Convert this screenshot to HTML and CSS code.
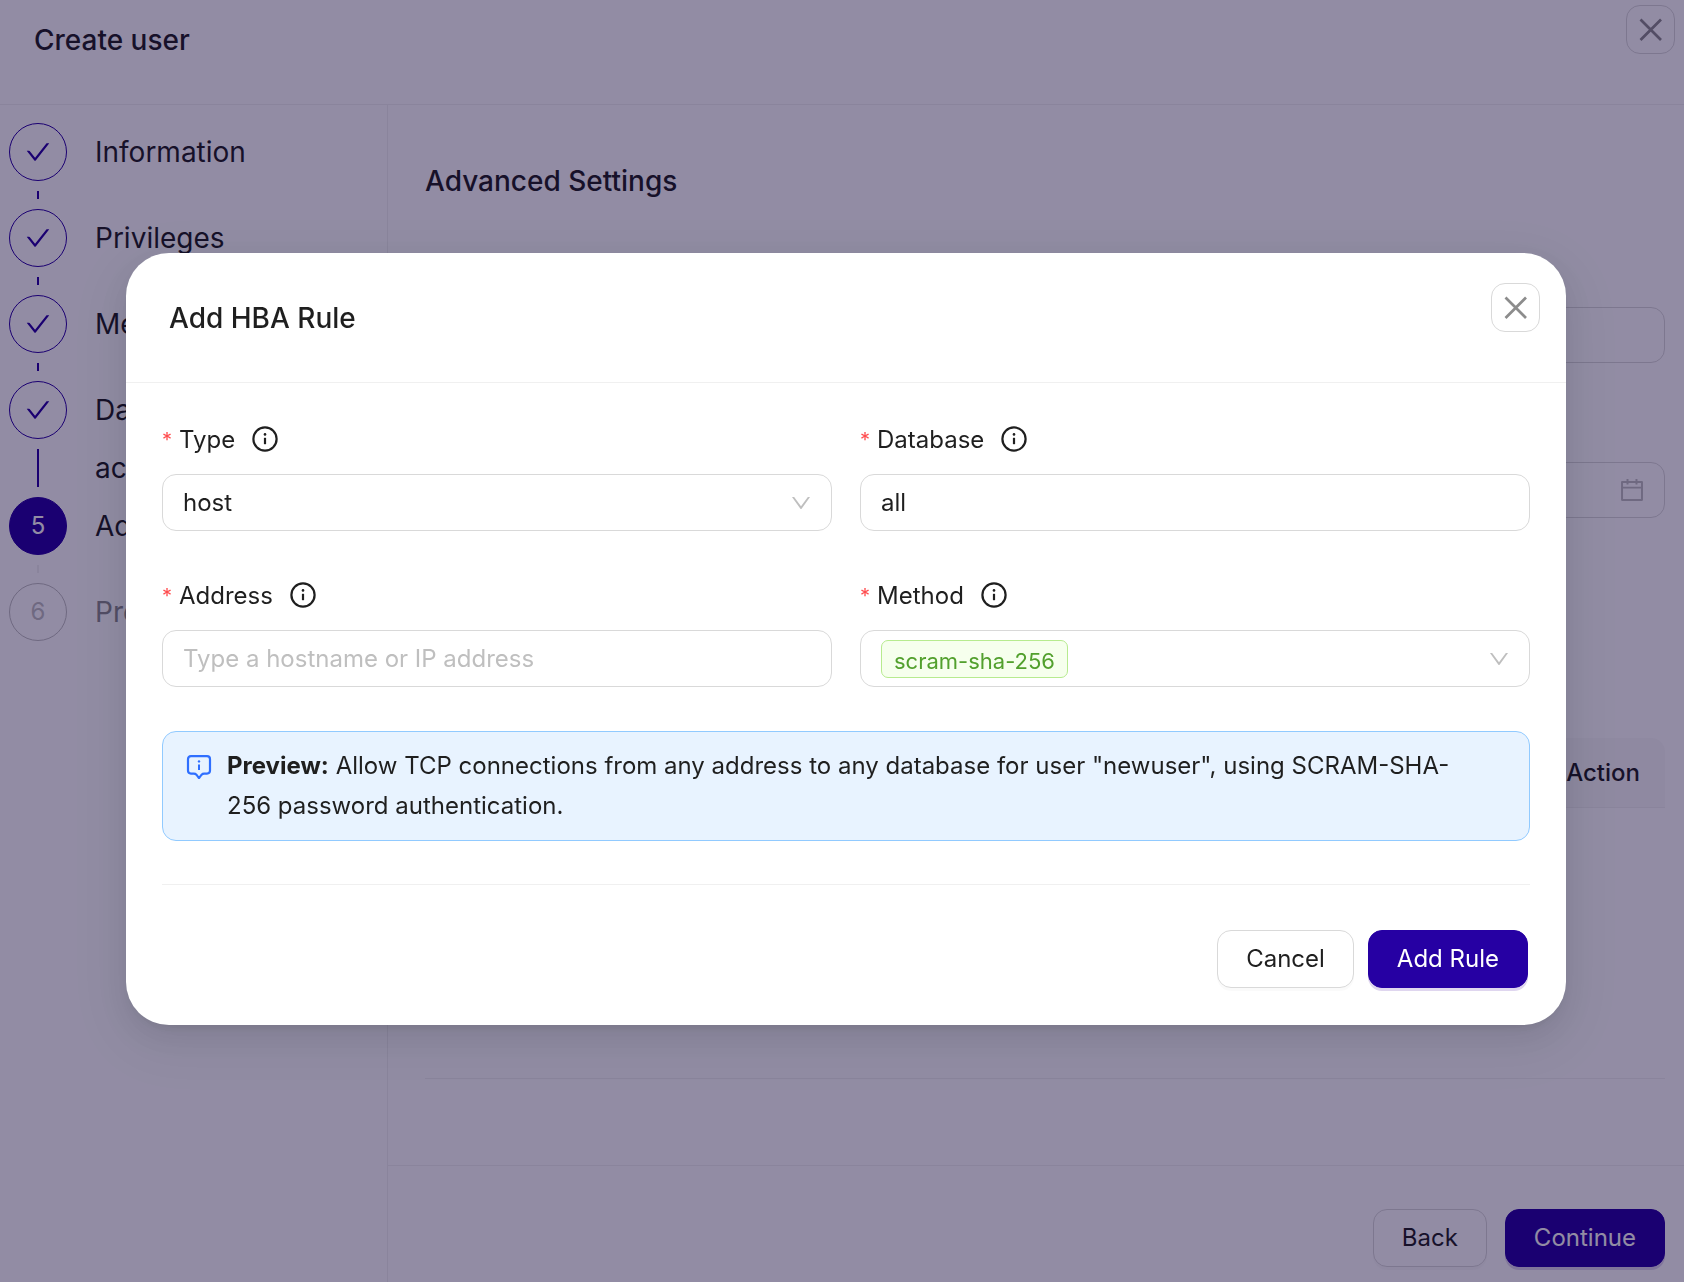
FILE: index.html
```html
<!DOCTYPE html>
<html lang="en">

<head>
    <meta charset="UTF-8">
    <title>Create user</title>
    <link rel="stylesheet" href="styles.css">
</head>

<body>
    <!-- shared icons -->
    <svg class="icon-defs" aria-hidden="true">
        <symbol id="icon-check" viewBox="0 0 1024 1024">
            <path d="M912 190h-69.9c-9.8 0-19.1 4.5-25.1 12.2L404.7 724.5 207 474a32 32 0 00-25.1-12.2H112c-6.7 0-10.4 7.7-6.3 12.9l273.9 347c12.8 16.2 37.4 16.2 50.3 0l488.4-618.9c4.1-5.1.4-12.8-6.3-12.8z" />
        </symbol>
        <symbol id="icon-down" viewBox="0 0 1024 1024">
            <path d="M884 256h-75c-5.1 0-9.9 2.5-12.9 6.6L512 654.2 227.9 262.6c-3-4.1-7.8-6.6-12.9-6.6h-75c-6.5 0-10.3 7.4-6.5 12.7l352.6 486.1c12.8 17.6 39 17.6 51.7 0l352.6-486.1c3.9-5.3.1-12.7-6.4-12.7z" />
        </symbol>
        <symbol id="icon-calendar" viewBox="0 0 1024 1024">
            <path d="M880 184H712v-64c0-4.4-3.6-8-8-8h-56c-4.4 0-8 3.6-8 8v64H384v-64c0-4.4-3.6-8-8-8h-56c-4.4 0-8 3.6-8 8v64H144c-17.7 0-32 14.3-32 32v664c0 17.7 14.3 32 32 32h736c17.7 0 32-14.3 32-32V216c0-17.7-14.3-32-32-32zm-40 656H184V460h656v380zM184 392V256h128v48c0 4.4 3.6 8 8 8h56c4.4 0 8-3.6 8-8v-48h256v48c0 4.4 3.6 8 8 8h56c4.4 0 8-3.6 8-8v-48h128v136H184z" />
        </symbol>
        <symbol id="icon-close" viewBox="0 0 24 24">
            <path d="M1.5 1.5L22 22M22 1.5L1.5 22" fill="none" stroke="currentColor" stroke-width="2.7" />
        </symbol>
        <symbol id="icon-info" viewBox="0 0 28 28">
            <circle cx="14" cy="13" r="11.6" fill="none" stroke="currentColor" stroke-width="2.2" />
            <circle cx="14" cy="8.4" r="1.3" />
            <path d="M14 11.8V18.2" fill="none" stroke="currentColor" stroke-width="2.2" />
        </symbol>
        <symbol id="icon-message" viewBox="0 0 26 26">
            <path d="M5 2.2H21Q24 2.2 24 5.2V16.6Q24 19.6 21 19.6H18.2Q16.6 19.6 15.6 20.7L13.4 23.6Q13 24 12.6 23.6L10.4 20.7Q9.4 19.6 7.8 19.6H5Q2 19.6 2 16.6V5.2Q2 2.2 5 2.2Z" fill="none" stroke="currentColor" stroke-width="2.2" />
            <circle cx="13" cy="7.4" r="1.2" />
            <path d="M13 10.4V16" fill="none" stroke="currentColor" stroke-width="2" />
        </symbol>
    </svg>

    <div class="page">
        <header class="page-header">
            <h1 class="title">Create user</h1>
            <button class="close" type="button" aria-label="Close"><svg><use href="#icon-close" /></svg></button>
        </header>

        <div class="page-main">
            <ol class="steps">
                <li class="step done">
                    <div class="step-side"><span class="step-icon"><svg><use href="#icon-check" /></svg></span></div>
                    <span class="step-label">Information</span>
                </li>
                <li class="step done">
                    <div class="step-side"><span class="step-icon"><svg><use href="#icon-check" /></svg></span></div>
                    <span class="step-label">Privileges</span>
                </li>
                <li class="step done">
                    <div class="step-side"><span class="step-icon"><svg><use href="#icon-check" /></svg></span></div>
                    <span class="step-label">Membership</span>
                </li>
                <li class="step done">
                    <div class="step-side"><span class="step-icon"><svg><use href="#icon-check" /></svg></span></div>
                    <span class="step-label">Database access</span>
                </li>
                <li class="step current">
                    <div class="step-side"><span class="step-icon">5</span></div>
                    <span class="step-label">Advanced</span>
                </li>
                <li class="step">
                    <div class="step-side"><span class="step-icon">6</span></div>
                    <span class="step-label">Preview</span>
                </li>
            </ol>

            <div class="content">
                <div class="content-body">
                    <h2 class="title">Advanced Settings</h2>
                    <div class="content-fields">
                        <input class="control" type="text" aria-label="Connection limit">
                        <div class="control-box">
                            <input class="control" type="text" aria-label="Expiry date">
                            <svg class="calendar"><use href="#icon-calendar" /></svg>
                        </div>
                    </div>
                    <table class="rules">
                        <thead>
                            <tr>
                                <th>Action</th>
                            </tr>
                        </thead>
                    </table>
                    <hr>
                </div>
                <footer class="content-footer">
                    <button class="btn" type="button">Back</button>
                    <button class="btn primary" type="button">Continue</button>
                </footer>
            </div>
        </div>
    </div>

    <div class="overlay">
        <div class="modal" role="dialog" aria-modal="true" aria-labelledby="modal-title">
            <div class="modal-header">
                <h2 class="title" id="modal-title">Add HBA Rule</h2>
                <button class="close" type="button" aria-label="Close"><svg><use href="#icon-close" /></svg></button>
            </div>
            <form class="modal-body">
                <div class="fields">
                    <div class="field">
                        <label for="type"><span class="required">*</span>Type <svg><use href="#icon-info" /></svg></label>
                        <div class="control-box">
                            <select class="control" id="type">
                                <option>host</option>
                            </select>
                            <svg class="down"><use href="#icon-down" /></svg>
                        </div>
                    </div>
                    <div class="field">
                        <label for="database"><span class="required">*</span>Database <svg><use href="#icon-info" /></svg></label>
                        <input class="control" type="text" id="database" value="all">
                    </div>
                    <div class="field">
                        <label for="address"><span class="required">*</span>Address <svg><use href="#icon-info" /></svg></label>
                        <input class="control" type="text" id="address" placeholder="Type a hostname or IP address">
                    </div>
                    <div class="field">
                        <label for="method"><span class="required">*</span>Method <svg><use href="#icon-info" /></svg></label>
                        <div class="control control-box">
                            <select class="tag" id="method">
                                <option>scram-sha-256</option>
                            </select>
                            <svg class="down"><use href="#icon-down" /></svg>
                        </div>
                    </div>
                </div>
                <div class="alert">
                    <svg><use href="#icon-message" /></svg>
                    <p><strong>Preview:</strong> Allow TCP connections from any address to any database for user "newuser", using SCRAM-SHA-256 password authentication.</p>
                </div>
                <div class="modal-footer">
                    <button class="btn" type="button">Cancel</button>
                    <button class="btn primary" type="submit">Add Rule</button>
                </div>
            </form>
        </div>
    </div>
</body>

</html>
```
FILE: styles.css
```css
* {
    box-sizing: border-box;
}

body {
    margin: 0;
    font-family: Inter, "Liberation Sans", sans-serif;
    font-size: 24px;
    line-height: 40px;
    color: #1f1f1f;
    background-color: #fff;
}

button,
input,
select {
    font: inherit;
    color: inherit;
}

svg {
    fill: currentColor;
    flex: none;
}

.icon-defs {
    display: none;
}

.title {
    margin: 0;
    font-size: 28px;
    line-height: 44px;
    font-weight: 500;
}

.page {
    display: flex;
    flex-direction: column;
    min-height: 100vh;
}

.page-header {
    display: flex;
    justify-content: space-between;
    align-items: flex-start;
    height: 105px;
    padding: 5px 9px 0 34px;
    border-bottom: 1px solid #f0f0f0;
}

.page-header .title,
.modal-header .title {
    padding-top: 13px;
}

.close {
    display: flex;
    align-items: center;
    justify-content: center;
    width: 49px;
    height: 49px;
    padding: 0;
    border: 1px solid #d9d9d9;
    border-radius: 14px;
    background: none;
    color: #8c8c8c;
    cursor: pointer;
}

.close svg {
    width: 24px;
    height: 24px;
}

.page-main {
    flex: 1;
    display: grid;
    grid-template-columns: 388px 1fr;
}

/* steps */

.steps {
    margin: 0;
    padding: 18px 120px 0 9px;
    list-style: none;
    border-right: 1px solid #f0f0f0;
}

.step {
    display: flex;
    gap: 28px;
    min-height: 86px;
    color: #8c8c8c;
}

.step-side {
    display: flex;
    flex-direction: column;
    align-items: center;
    gap: 10px;
    padding-bottom: 10px;
}

.step-side::after {
    content: "";
    flex: 1;
    width: 2px;
    background-color: #f0f0f0;
}

.step:last-child .step-side::after {
    display: none;
}

.step-icon {
    display: flex;
    align-items: center;
    justify-content: center;
    width: 58px;
    height: 58px;
    border: 1px solid #bfbfbf;
    border-radius: 50%;
    color: #bfbfbf;
}

.step-icon svg {
    width: 28px;
    height: 28px;
}

.step-label {
    font-size: 28px;
    line-height: 58px;
}

.done,
.current {
    color: #1f1f1f;
}

.done .step-icon {
    border-color: #2600a3;
    color: #2600a3;
}

.done .step-side::after {
    background-color: #2600a3;
}

.current .step-icon {
    border-color: #2600a3;
    background-color: #2600a3;
    color: #fff;
}

/* content */

.content {
    display: flex;
    flex-direction: column;
}

.content-body {
    flex: 1;
    padding: 54px 19px 0 37px;
}

.content-fields {
    display: grid;
    gap: 99px;
    padding: 104px 0 220px;
}

.rules {
    width: 100%;
    border-collapse: separate;
    border-spacing: 0;
}

.rules th {
    padding: 15px 25px 14px;
    border-bottom: 1px solid #f0f0f0;
    border-radius: 14px 14px 0 0;
    background-color: #fafafa;
    font-weight: 500;
    text-align: right;
}

hr {
    margin: 270px 0 0;
    border: 0;
    border-top: 1px solid #f0f0f0;
}

.content-footer {
    display: flex;
    justify-content: flex-end;
    gap: 18px;
    padding: 43px 19px 15px;
    border-top: 1px solid #f0f0f0;
}

/* form controls */

.control {
    display: block;
    width: 100%;
    height: 57px;
    padding: 0 20px;
    border: 1px solid #d9d9d9;
    border-radius: 14px;
    background-color: #fff;
    appearance: none;
    outline: none;
}

.content .control {
    height: 56px;
}

.control::placeholder {
    color: #bfbfbf;
    opacity: 1;
}

.control-box {
    position: relative;
    display: flex;
    align-items: center;
}

.down,
.calendar {
    position: absolute;
    right: 19px;
    width: 24px;
    height: 24px;
    color: #bfbfbf;
    pointer-events: none;
}

.control .down {
    right: 18px;
}

.calendar {
    width: 28px;
    height: 28px;
}

.tag {
    height: 38px;
    padding: 0 12px;
    border: 1px solid #b7eb8f;
    border-radius: 7px;
    background-color: #f6ffed;
    color: #52a02d;
    font-size: 22px;
    appearance: none;
}

.btn {
    height: 58px;
    padding: 0 28px;
    border: 1px solid #d9d9d9;
    border-radius: 14px;
    background-color: #fff;
    box-shadow: 0 3px 0 rgba(0, 0, 0, 0.02);
    cursor: pointer;
}

.btn.primary {
    border-color: #2600a3;
    background-color: #2600a3;
    box-shadow: 0 3px 0 #dfd6ef;
    color: #fff;
}

/* modal */

.overlay {
    position: fixed;
    inset: 0;
    display: flex;
    align-items: center;
    padding: 0 118px 4px 126px;
    background-color: rgba(13, 0, 53, 0.45);
}

.modal {
    width: 100%;
    border-radius: 43px;
    background-color: #fff;
    box-shadow: 0 11px 29px rgba(0, 0, 0, 0.08), 0 5px 11px -7px rgba(0, 0, 0, 0.12), 0 16px 50px 14px rgba(0, 0, 0, 0.05);
}

.modal-header {
    display: flex;
    justify-content: space-between;
    align-items: flex-start;
    height: 130px;
    padding: 30px 26px 0 43px;
    border-bottom: 1px solid #f0f0f0;
}

.modal-body {
    padding: 37px 36px 37px;
}

.fields {
    display: grid;
    grid-template-columns: 1fr 1fr;
    gap: 45px 28px;
}

.field label {
    display: flex;
    align-items: center;
    margin-bottom: 14px;
}

.field label svg {
    width: 28px;
    height: 28px;
    margin-left: 16px;
}

.required {
    margin-right: 7px;
    color: #ff4d4f;
    font-size: 20px;
}

.alert {
    display: flex;
    gap: 15px;
    margin: 44px 0 43px;
    padding: 14px 43px 14px 23px;
    border: 1px solid #91caff;
    border-radius: 14px;
    background-color: #e8f3ff;
}

.alert svg {
    width: 26px;
    height: 26px;
    margin-top: 8px;
    color: #2f6fff;
}

.alert p {
    margin: 0;
}

.modal-footer {
    display: flex;
    justify-content: flex-end;
    gap: 14px;
    padding: 45px 2px 0 0;
    border-top: 1px solid #f0f0f0;
}
```
